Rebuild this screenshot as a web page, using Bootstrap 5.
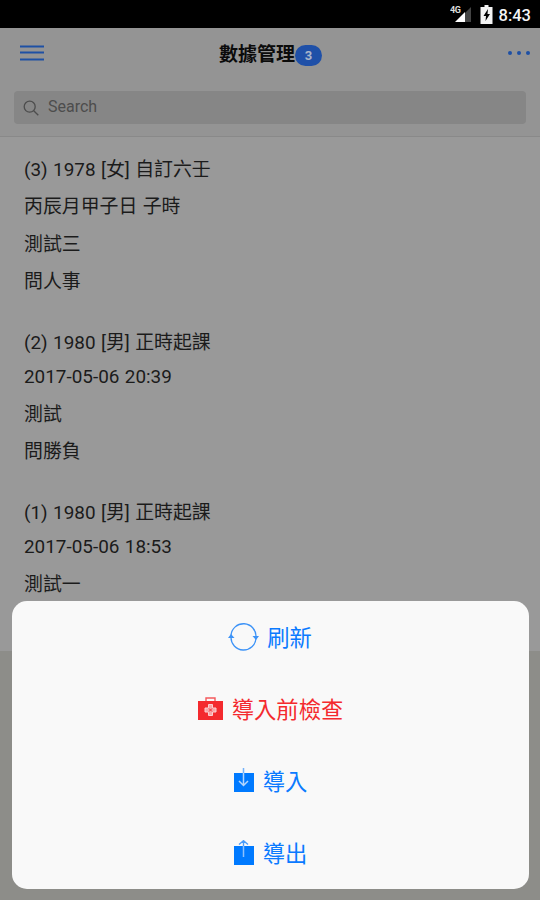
<!DOCTYPE html>
<html lang="zh-Hant">
<head>
<meta charset="utf-8">
<meta name="viewport" content="width=device-width, initial-scale=1">
<title>數據管理</title>
<link rel="stylesheet" href="https://cdn.jsdelivr.net/npm/bootstrap@5.3.0/dist/css/bootstrap.min.css">
<style>
  body { font-family: Roboto, "Noto Sans CJK TC", sans-serif; background: #8d8d89; height: 900px; }
  svg { display: block; flex: none; }
  .status-bar { height: 28px; background: #000; color: #f4f4f4; font-size: 16.5px; font-weight: 500; line-height: 28px; padding: 0 9px 0 0; }
  .clock { padding-top: 3px; margin-left: 6px; }
  .top-bar { height: 109px; background: #949494; border-bottom: 1px solid #898989; }
  .title-row { height: 50px; padding: 0 10px 0 20px; }
  .title-group { margin: 3px 11px 0 0; }
  .page-title { font-size: 19px; font-weight: 700; color: #0b0b0b; line-height: 28px; }
  .count-pill { width: 27px; height: 21px; margin-top: 2px; background: #1f50a8; color: #a9b5c9; font-size: 13px; font-weight: 700; line-height: 21px; padding: 0; border-radius: 11px; }
  .search-box { height: 33px; margin: 13px 14px 0; padding: 0 9px; background: #868686; border-radius: 4px; color: #4d4d4d; font-size: 16px; gap: 9px; }
  .search-box span { margin-top: -2px; }
  .records { height: 514px; background: #999; padding: 14px 24px 0; overflow: hidden; color: #1b1b1b; font-size: 18.9px; }
  .record { height: 170px; }
  .record.tall { height: 173px; }
  .record p { margin: 0; height: 37.3px; line-height: 37.3px; white-space: nowrap; word-spacing: .7px; }
  .record p.stamp { height: 34.5px; line-height: 31px; }
  .action-sheet { left: 12px; top: 601px; width: 517px; height: 288px; background: #f9f9f9; border-radius: 15px; }
  .action { height: 72px; font-size: 22.3px; line-height: 72px; color: #0a7aff; padding: 0 1px 0 0; background: none; border: 0; }
  .action span { padding-top: 1px; }
  .action.warn { color: #f42a2e; }
</style>
</head>
<body class="position-relative overflow-hidden">
  <div class="status-bar d-flex align-items-center justify-content-end">
    <svg width="22" height="18" viewBox="0 0 22 18">
      <path d="M6 17 21 2v15z" fill="#444"/><path d="M5 17 15 7v10z" fill="#fff"/>
      <text x="0" y="8" font-size="9" font-weight="700" fill="#ddd" textLength="11">4G</text>
    </svg>
    <svg class="ms-2" width="13" height="19" viewBox="0 0 12 19">
      <path d="M4 0h4v2h4v17H0V2h4z" fill="#f4f4f4"/><path d="M7.500 4 3 11h2.500l-.5 5 4.500-7H7z" fill="#000"/>
    </svg>
    <span class="clock">8:43</span>
  </div>

  <header class="top-bar">
    <div class="title-row d-flex align-items-center justify-content-between">
      <svg width="24" height="16" viewBox="0 0 24 16"><path d="M0 1.500h24M0 7.500h24M0 14.500h24" stroke="#1e50a4" stroke-width="2"/></svg>
      <div class="title-group d-flex align-items-center">
        <span class="page-title">數據管理</span>
        <span class="badge count-pill">3</span>
      </div>
      <svg width="22" height="4" viewBox="0 0 22 4" fill="#1e50a4"><circle cx="2" cy="2" r="2"/><circle cx="11" cy="2" r="2"/><circle cx="20" cy="2" r="2"/></svg>
    </div>
    <div class="search-box d-flex align-items-center">
      <svg width="16" height="16" viewBox="0 0 16 16" fill="none" stroke="#4d4d4d" stroke-width="1.300"><circle cx="6.700" cy="6.700" r="5.500"/><path d="m10.700 10.700 4.600 4.600"/></svg>
      <span>Search</span>
    </div>
  </header>

  <main class="records">
    <div class="record tall">
      <p>(3) 1978 [女] 自訂六壬</p><p>丙辰月甲子日 子時</p><p>測試三</p><p>問人事</p>
    </div>
    <div class="record">
      <p>(2) 1980 [男] 正時起課</p><p class="stamp">2017-05-06 20:39</p><p>測試</p><p>問勝負</p>
    </div>
    <div class="record">
      <p>(1) 1980 [男] 正時起課</p><p class="stamp">2017-05-06 18:53</p><p>測試一</p>
    </div>
  </main>

  <div class="action-sheet position-absolute d-flex flex-column">
    <button class="action d-flex align-items-center justify-content-center gap-2">
      <svg width="31" height="28" viewBox="0 0 31 28" fill="none" stroke="#3d93f7" stroke-width="1.300">
        <path d="M3 12.500a12.500 12.500 0 0 1 25 1.500M28 15a12.500 12.500 0 0 1-25-1"/>
        <path d="m0 15 3-4 3.500 4zM24.500 13H31l-3 4z" fill="#3d93f7" stroke="none"/>
      </svg>
      <span>刷新</span>
    </button>
    <button class="action warn d-flex align-items-center justify-content-center gap-2">
      <svg width="27" height="24" viewBox="0 0 27 24">
        <path d="M9 4V1h9v3" fill="none" stroke="#f4595c" stroke-width="1.400"/>
        <path d="M1 4h25v19H1z" fill="#f42a2e"/>
        <path d="M11.500 7.500h4v3.500H19v4h-3.500v3.500h-4V15H8v-4h3.500z" fill="#f8a5a7" stroke="#fbd0d1" stroke-width="1"/>
        <path d="m12 11.500 3 3m0-3-3 3" stroke="#f42a2e" stroke-width="1"/>
      </svg>
      <span>導入前檢查</span>
    </button>
    <button class="action d-flex align-items-center justify-content-center gap-2">
      <svg width="22" height="26" viewBox="0 0 22 26" fill="none">
        <path d="M1 5h20v19H1z" fill="#007aff"/><path d="M10.500 0v5" stroke="#74b3fb" stroke-width="1.500"/>
        <path d="M10.500 5v12m-4.500-4 4.500 4.500L15 13" stroke="#b4d6fd" stroke-width="1.500"/>
      </svg>
      <span>導入</span>
    </button>
    <button class="action d-flex align-items-center justify-content-center gap-2">
      <svg width="22" height="26" viewBox="0 0 22 26" fill="none">
        <path d="M1 6h20v19H1z" fill="#007aff"/><path d="M6 4.500 10.500.7 15 4.500M10.500 1v5" stroke="#4a9dfb" stroke-width="1.400"/>
        <path d="M10.500 6v11" stroke="#8dc1fc" stroke-width="1.500"/>
      </svg>
      <span>導出</span>
    </button>
  </div>
<script src="https://cdn.jsdelivr.net/npm/bootstrap@5.3.0/dist/js/bootstrap.bundle.min.js"></script>
</body>
</html>
